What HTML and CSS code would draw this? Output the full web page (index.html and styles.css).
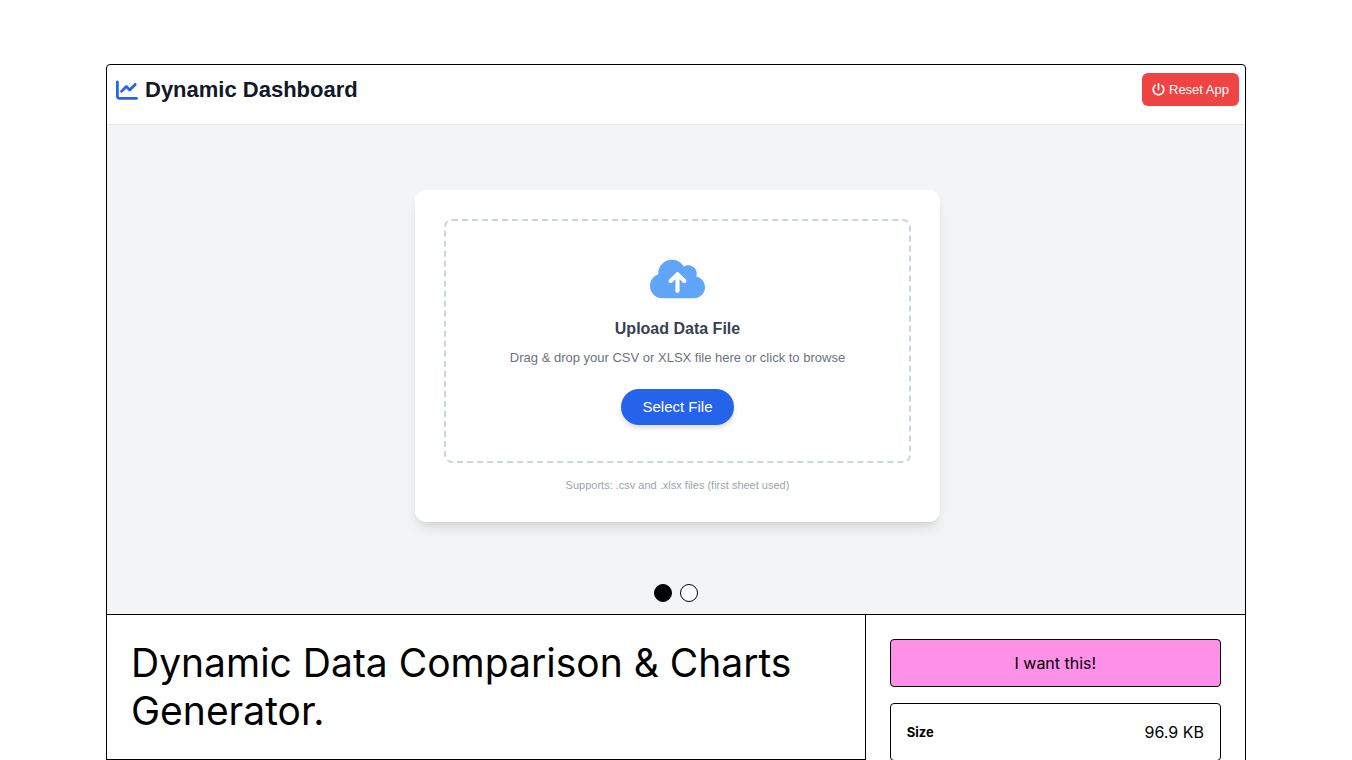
FILE: index.html
```html
<!DOCTYPE html>
<html lang="en">
<head>
    <meta charset="UTF-8">
    <meta name="viewport" content="width=device-width, initial-scale=1.0">
    <title>Dynamic Data Comparison &amp; Charts Generator.</title>
    <link rel="stylesheet" href="styles.css">
</head>
<body>
    <main class="product">
        <section class="preview">
            <header class="app-header">
                <h2 class="app-title">
                    <svg class="chart-icon" viewBox="0 0 512 512" aria-hidden="true"><path d="M64 64c0-17.7-14.3-32-32-32S0 46.3 0 64V400c0 44.2 35.8 80 80 80H480c17.7 0 32-14.3 32-32s-14.3-32-32-32H80c-8.8 0-16-7.2-16-16V64zm406.6 86.6c12.5-12.5 12.5-32.8 0-45.3s-32.8-12.5-45.3 0L320 210.7l-57.4-57.4c-12.5-12.5-32.8-12.5-45.3 0l-112 112c-12.5 12.5-12.5 32.8 0 45.3s32.8 12.5 45.3 0L240 221.3l57.4 57.4c12.5 12.5 32.8 12.5 45.3 0l128-128z"/></svg>
                    Dynamic Dashboard
                </h2>
                <button type="button" class="reset-button">
                    <svg class="power-icon" viewBox="0 0 512 512" aria-hidden="true"><path d="M288 32c0-17.7-14.3-32-32-32s-32 14.3-32 32V256c0 17.7 14.3 32 32 32s32-14.3 32-32V32zM143.5 120.6c13.6-11.3 15.4-31.5 4.1-45.1s-31.5-15.4-45.1-4.1C49.7 115.4 16 181.8 16 256c0 132.5 107.5 240 240 240s240-107.5 240-240c0-74.2-33.8-140.6-86.6-184.6c-13.6-11.3-33.8-9.4-45.1 4.1s-9.4 33.8 4.1 45.1c38.9 32.3 63.5 81 63.5 135.4c0 97.2-78.8 176-176 176s-176-78.8-176-176c0-54.4 24.7-103.1 63.5-135.4z"/></svg>
                    Reset App
                </button>
            </header>

            <div class="app-body">
                <div class="upload-card">
                    <div class="dropzone">
                        <svg class="cloud-icon" viewBox="0 0 640 512" aria-hidden="true"><path d="M144 480C64.5 480 0 415.5 0 336c0-62.8 40.2-116.2 96.2-135.9c-.1-2.7-.2-5.4-.2-8.1c0-88.4 71.6-160 160-160c59.3 0 111 32.2 138.7 80.2C409.9 102 428.3 96 448 96c53 0 96 43 96 96c0 12.2-2.3 23.8-6.4 34.6C596 238.4 640 290.1 640 352c0 70.7-57.3 128-128 128H144zm79-217c-9.4 9.4-9.4 24.6 0 33.9s24.6 9.4 33.9 0l39-39V392c0 13.3 10.7 24 24 24s24-10.7 24-24V257.9l39 39c9.4 9.4 24.6 9.4 33.9 0s9.4-24.6 0-33.9l-80-80c-9.4-9.4-24.6-9.4-33.9 0l-80 80z"/></svg>
                        <h3 class="upload-title">Upload Data File</h3>
                        <p class="upload-text">Drag &amp; drop your CSV or XLSX file here or click to browse</p>
                        <button type="button" class="select-button">Select File</button>
                    </div>
                    <p class="supports">Supports: .csv and .xlsx files (first sheet used)</p>
                </div>
            </div>

            <div class="dots">
                <button type="button" class="dot active" aria-label="Show item 1"></button>
                <button type="button" class="dot" aria-label="Show item 2"></button>
            </div>
        </section>

        <div class="details">
            <div class="details-main">
                <h1 class="product-title">Dynamic Data Comparison &amp; Charts Generator.</h1>
            </div>
            <aside class="sidebar">
                <button type="button" class="buy-button">I want this!</button>
                <dl class="info">
                    <dt>Size</dt>
                    <dd>96.9 KB</dd>
                </dl>
            </aside>
        </div>
    </main>
</body>
</html>
```
FILE: styles.css
```css
:root {
    --border: 1px solid #000;
    --pink: #ff90e8;
    --blue: #2563eb;
    --gray-bg: #f3f4f6;
    --app-font: "Liberation Sans", Arial, sans-serif;
    --page-font: Inter, "Liberation Sans", sans-serif;
}

* {
    box-sizing: border-box;
    margin: 0;
    padding: 0;
}

body {
    font-family: var(--page-font);
    font-size: 16px;
    line-height: 24px;
    color: #000;
    background: #fff;
    padding: 64px 64px 0;
}

button {
    font: inherit;
    cursor: pointer;
}

.product {
    max-width: 1140px;
    margin: 0 auto;
    border: var(--border);
    border-radius: 4px;
}

/* App preview */
.preview {
    position: relative;
    border-bottom: var(--border);
    font-family: var(--app-font);
}

.app-header {
    display: flex;
    justify-content: space-between;
    align-items: flex-start;
    padding: 8px 6px 17px 9px;
    border-bottom: 1px solid #e5e7eb;
}

.app-title {
    display: flex;
    align-items: center;
    gap: 7px;
    font-size: 22px;
    line-height: 34px;
    color: #111827;
}

.chart-icon {
    width: 22px;
    height: 22px;
    fill: var(--blue);
}

.reset-button {
    display: flex;
    align-items: center;
    gap: 4px;
    height: 33px;
    padding: 0 10px;
    border: none;
    border-radius: 6px;
    background: #ef4444;
    color: #fff;
    font-size: 13px;
}

.power-icon {
    width: 13px;
    height: 13px;
    fill: currentColor;
}

.app-body {
    background: var(--gray-bg);
    padding: 65px 24px 92px 27px;
}

.upload-card {
    max-width: 525px;
    margin: 0 auto;
    padding: 29px;
    border-radius: 11px;
    background: #fff;
    box-shadow: 0 9px 14px -3px rgba(0, 0, 0, 0.1), 0 4px 6px -4px rgba(0, 0, 0, 0.1);
    text-align: center;
}

.dropzone {
    display: flex;
    flex-direction: column;
    align-items: center;
    padding: 36px 24px;
    border: 2px dashed #cbd5e1;
    border-radius: 8px;
}

.cloud-icon {
    width: 55px;
    height: 44px;
    fill: #60a5fa;
}

.upload-title {
    margin-top: 16px;
    font-size: 16px;
    line-height: 24px;
    color: #374151;
}

.upload-text {
    margin-top: 7px;
    font-size: 13px;
    line-height: 20px;
    color: #6b7280;
}

.select-button {
    height: 36px;
    margin-top: 21px;
    padding: 0 21px;
    border: none;
    border-radius: 18px;
    background: var(--blue);
    color: #fff;
    font-size: 15px;
    box-shadow: 0 3px 5px rgba(0, 0, 0, 0.14);
}

.supports {
    margin-top: 14px;
    font-size: 11px;
    line-height: 16px;
    color: #9ca3af;
}

/* Carousel dots */
.dots {
    position: absolute;
    left: 0;
    right: 0;
    bottom: 12px;
    display: flex;
    justify-content: center;
    gap: 8px;
}

.dot {
    width: 18px;
    height: 18px;
    border: var(--border);
    border-radius: 50%;
    background: #fff;
}

.dot.active {
    background: #000;
}

/* Product details */
.details {
    display: grid;
    grid-template-columns: 2fr 1fr;
    align-items: start;
}

.details-main {
    padding: 24px;
    border-right: var(--border);
    border-bottom: var(--border);
}

.product-title {
    font-size: 39px;
    font-weight: 400;
    line-height: 48px;
}

.sidebar {
    display: flex;
    flex-direction: column;
    gap: 16px;
    padding: 24px;
}

.buy-button {
    height: 48px;
    border: var(--border);
    border-radius: 4px;
    background: var(--pink);
    color: #000;
}

.info {
    display: flex;
    justify-content: space-between;
    align-items: center;
    padding: 16px;
    border: var(--border);
    border-radius: 4px;
}

.info dt {
    font-size: 13px;
    font-weight: 700;
}
```
